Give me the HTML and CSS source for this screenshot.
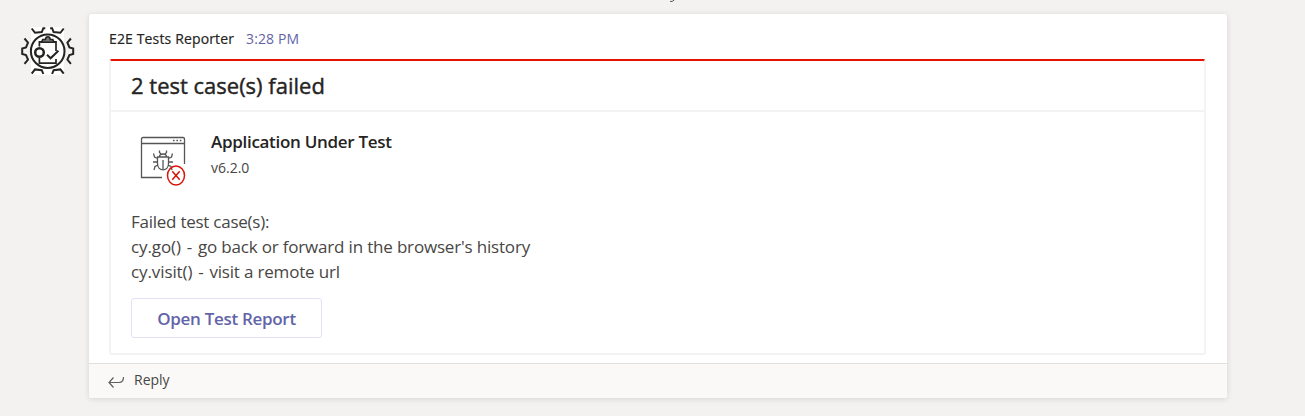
FILE: index.html
```html
<!DOCTYPE html>
<html lang="en">
<head>
<meta charset="utf-8">
<title>E2E Tests Reporter</title>
<link rel="stylesheet" href="styles.css">
</head>
<body>
<main class="channel">
  <svg class="clip-mark" width="5" height="2" viewBox="0 0 5 2"><path d="M0 1.4h2.200L4.300 0" fill="none" stroke="#555"/></svg>
  <svg class="avatar" width="54" height="50" viewBox="0 0 54 50" fill="none" stroke="#252423" stroke-width="2">
    <rect x="10" y="1" width="33" height="48" fill="#fff" stroke="none"/>
    <path d="M10.700 2.500 14 6.800l6.800-.8L22.300 2.200h2M42.700 2.500l-3.300 4.300-6.800-.8-1.500-3.800h-2M10.700 47.700 14 43.400l6.800.8 1.500 3.800M42.700 47.700l-3.300-4.300-6.800.8-1.500 3.800"/>
    <path d="M3.500 12.500 7 16.700 5 21.500 1.200 22.500v5.400L5 29l2 4.700-3.500 4.200M49.900 12.500l-3.500 4.200 2 4.800 3.800 1v5.400L48.400 29l-2 4.700 3.500 4.200"/>
    <circle cx="26.700" cy="25.200" r="16.800"/>
    <path d="M18.400 20.500v-4.700h2.800M32 15.800h3V25M18.400 32v5.200H35V33" stroke-width="1.700"/>
    <path d="M20.500 16.200l1.200-2.700h2.700c.3-3.600 4.500-3.600 4.800 0h2.600l1.200 2.700z" fill="#777" stroke-width="1.600"/>
    <circle cx="18.500" cy="26.500" r="4.300" fill="#fff" stroke-width="2.500"/>
    <path d="m26 28.700 3.600 3.600 7.800-7.600" stroke-width="2"/>
  </svg>
  <article class="message">
    <div class="content">
      <header class="byline"><span class="author">E2E Tests Reporter</span><time class="time">3:28 PM</time></header>
      <section class="attachment">
        <h1 class="title">2 test case(s) failed</h1>
        <div class="details">
          <div class="app">
            <svg class="app-icon" width="48" height="52" viewBox="0 0 48 52" fill="none" stroke="#555" stroke-width="1.300">
              <path d="M23 42.500H2.500V4Q2.500 2.500 4 2.500h40Q45.500 2.500 45.500 4v25M2.500 8.500h43"/>
              <path d="M34 5.500h1.600m1.800 0h1.600m1.800 0h1.600" stroke-width="1.400"/>
              <path d="M18.500 22h11v6.500c0 8.500-11 8.500-11 0zM20.500 22c0-4 7-4 7 0M24 25v9M20.500 15.500v2l1.500 1.500M27.500 15.500v2L26 19M18.500 23.500l-3-1.500-1-3.500M29.500 23.500l3-1.500 1-3.500M18 27h-4M30 27h4M19 30l-3 1.500-1 3.500M29 30l3 1.500 1 3.500"/>
              <ellipse cx="37" cy="40.500" rx="8.500" ry="9.500" stroke="#d9150b" stroke-width="1.500"/>
              <path d="m33.300 36.200 7.400 8.600m0-8.600-7.400 8.600" stroke="#d9150b" stroke-width="1.500"/>
            </svg>
            <div class="app-text">
              <h2 class="app-name">Application Under Test</h2>
              <p class="version">v6.2.0</p>
            </div>
          </div>
          <div class="failures">
            <p class="label">Failed test case(s):</p>
            <p><span class="command">cy.go() - </span><span class="summary">go back or forward in the browser's history</span></p>
            <p><span class="command">cy.visit() - </span><span class="summary">visit a remote url</span></p>
          </div>
          <button class="report"><span>Open Test Report</span></button>
        </div>
      </section>
    </div>
    <footer class="reply">
      <svg width="17" height="14" viewBox="0 0 17 14" fill="none" stroke="#605e5c" stroke-width="1.200"><path d="M5.500 2.500 1 7.500l4.500 5M1 7.500h10Q15.500 7.500 15.500 2"/></svg>
      <span class="reply-text">Reply</span>
    </footer>
  </article>
</main>
</body>
</html>
```
FILE: styles.css
```css
* { box-sizing: border-box; }
body { margin: 0; background: #f3f2f1; font-family: "Open Sans", "Noto Sans", sans-serif; color: #252423; }
h1, h2, p { margin: 0; }
svg { display: block; flex: none; }
p, h1, h2, span, time { white-space: nowrap; }
.channel { display: flex; height: 416px; padding: 14px 0 0 21px; overflow: hidden; position: relative; }
.clip-mark { position: absolute; left: 670px; top: 0; }
.avatar { margin: 12px 14px 0 0; }
.message { width: 1138px; height: 384px; background: #fff; border-radius: 3px; box-shadow: 0 1px 6px rgba(0,0,0,.12); display: flex; flex-direction: column; overflow: hidden; }
.content { height: 349px; padding: 15px 21px 0 20px; }
.byline { display: flex; gap: 12px; height: 30px; line-height: 20px; font-size: 14px; }
.author { width: 125px; letter-spacing: .14px; -webkit-text-stroke: .2px #252423; }
.time { color: #6264a7; letter-spacing: .14px; }
.attachment { height: 296px; border: 2px solid #f3f3f3; border-top-color: #e81000; border-radius: 3px; }
.title { height: 51px; padding-left: 20px; border-bottom: 2px solid #f3f3f3; font-size: 22px; line-height: 49px; font-weight: 400; -webkit-text-stroke: .4px #252423; }
.details { padding: 22px 20px 0; }
.app { display: flex; gap: 24px; padding-left: 8px; height: 77px; }
.app-icon { margin-top: 1px; }
.app-name { font-size: 17px; font-weight: 600; line-height: 16px; letter-spacing: -.3px; }
.version { font-size: 14px; line-height: 20px; margin-top: 8px; color: #484644; }
.failures { margin-top: -2px; font-size: 17px; line-height: 25px; letter-spacing: -.1px; color: #484644; }
.label { letter-spacing: -.25px; }
.command { word-spacing: 1.5px; }
.summary { letter-spacing: -.18px; }
.report { display: flex; justify-content: center; align-items: center; width: 191px; height: 40px; margin-top: 14px; padding: 0; border: 1px solid #e2e2f6; border-radius: 3px; background: #fff; color: #6264a7; font: 600 17px "Open Sans", sans-serif; letter-spacing: -.3px; }
.reply { height: 35px; border-top: 1px solid #e1dfdd; background: #faf9f8; display: flex; gap: 9px; padding: 7px 0 0 19px; font-size: 14px; line-height: 18px; color: #484644; }
.reply svg { margin-top: 4px; }
```
